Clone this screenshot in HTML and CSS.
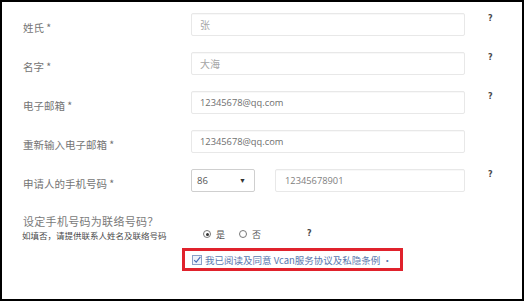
FILE: index.html
```html
<!DOCTYPE html>
<html lang="zh-CN">
<head>
<meta charset="utf-8">
<title>表单</title>
<link rel="stylesheet" href="styles.css">
</head>
<body>
<div class="frame">
  <div class="form">
    <div class="row">
      <label class="label">姓氏 *</label>
      <div class="control"><div class="input light">张</div></div>
      <span class="help">?</span>
    </div>
    <div class="row">
      <label class="label">名字 *</label>
      <div class="control"><div class="input light">大海</div></div>
      <span class="help">?</span>
    </div>
    <div class="row">
      <label class="label">电子邮箱 *</label>
      <div class="control"><div class="input">12345678@qq.com</div></div>
      <span class="help">?</span>
    </div>
    <div class="row">
      <label class="label">重新输入电子邮箱 *</label>
      <div class="control"><div class="input">12345678@qq.com</div></div>
      <span class="help hidden">?</span>
    </div>
    <div class="row">
      <label class="label">申请人的手机号码 *</label>
      <div class="control phone">
        <div class="select"><span>86</span><span class="caret">▼</span></div>
        <div class="input tel">12345678901</div>
      </div>
      <span class="help">?</span>
    </div>
  </div>
  <div class="contact">
    <div class="contact-text">
      <div class="q">设定手机号码为联络号码？</div>
      <div class="note">如填否，请提供联系人姓名及联络号码</div>
    </div>
    <div class="radios">
      <span class="radio on"></span><span class="rtext">是</span>
      <span class="radio"></span><span class="rtext">否</span>
      <span class="help inline">?</span>
    </div>
  </div>
  <div class="agree-wrap">
    <div class="agree">
      <svg class="check" width="10" height="10" viewBox="0 0 10 10">
        <rect x="0.5" y="0.5" width="9" height="9" fill="#eef3fb" stroke="#8aa0c8"/>
        <path d="M2.2 5.2 L4.2 7.2 L8.4 1.8" fill="none" stroke="#4a70b8" stroke-width="1.2"/>
      </svg>
      <span class="agree-text">我已阅读及同意 Vcan服务协议及私隐条例 ·</span>
    </div>
  </div>
</div>
</body>
</html>
```
FILE: styles.css
```css
html, body {
  margin: 0;
  padding: 0;
  background: #fff;
}
body {
  font-family: "Noto Sans CJK SC", "Noto Sans", sans-serif;
  color: #666;
}
.frame {
  width: 499px;
  height: 286px;
  border: 2px solid #000;
  padding: 11px 0 0 21px;
}
.form {
  display: flex;
  flex-direction: column;
  gap: 16px;
}
.row {
  display: grid;
  grid-template-columns: 168px 274px auto;
  align-items: start;
  height: 23px;
}
.label {
  font-size: 10.5px;
  line-height: 23px;
  padding-top: 3px;
  color: #747474;
  white-space: nowrap;
}
.control {
  height: 23px;
}
.input {
  height: 23px;
  box-sizing: border-box;
  border: 1px solid #e8e8e8;
  border-radius: 2px;
  padding: 0 8px;
  font-family: "Open Sans", "Noto Sans CJK SC", sans-serif;
  font-size: 9.3px;
  line-height: 21px;
  color: #6e6e6e;
  box-shadow: inset 0 1px 1px rgba(0,0,0,0.03);
}
.input.light {
  color: #a6a6a6;
  font-size: 10px;
  font-family: "Noto Sans CJK SC", sans-serif;
}
.phone {
  display: flex;
  gap: 20px;
}
.select {
  width: 64px;
  height: 23px;
  box-sizing: border-box;
  border: 1px solid #cfcfcf;
  border-radius: 2px;
  display: flex;
  justify-content: space-between;
  align-items: center;
  padding: 0 8px 0 5px;
  font-family: "Open Sans", sans-serif;
  font-size: 9.5px;
  color: #555;
}
.caret {
  font-size: 7px;
  color: #333;
}
.input.tel {
  flex: 1;
  padding-left: 9px;
  color: #808080;
}
.help {
  font-family: "DejaVu Sans", sans-serif;
  font-weight: bold;
  font-size: 8px;
  color: #4a4a4a;
  line-height: 10px;
  padding-top: 1px;
  margin-left: 23px;
}
.hidden {
  visibility: hidden;
}
.contact {
  display: flex;
  align-items: flex-end;
  margin-top: 21px;
}
.contact-text {
  width: 180px;
}
.q {
  font-size: 11px;
  line-height: 16px;
  color: #7a7a7a;
  letter-spacing: 0.3px;
}
.note {
  font-size: 8.5px;
  line-height: 12px;
  color: #4a4a4a;
  margin-left: -1px;
}
.radios {
  display: flex;
  align-items: center;
  height: 12px;
  margin-bottom: 1px;
}
.radio {
  width: 8px;
  height: 8px;
  box-sizing: border-box;
  border: 1px solid #777;
  border-radius: 50%;
  display: inline-block;
  position: relative;
}
.radio.on::after {
  content: "";
  position: absolute;
  left: 1.5px;
  top: 1.5px;
  width: 3px;
  height: 3px;
  border-radius: 50%;
  background: #333;
}
.rtext {
  font-size: 9px;
  color: #555;
  margin: 0 14px 0 5px;
}
.help.inline {
  margin-left: 32px;
  padding-top: 0;
}
.agree-wrap {
  margin-top: 7px;
  padding-left: 159px;
}
.agree {
  width: 221px;
  height: 23px;
  box-sizing: border-box;
  border: 3px solid #e0222c;
  display: flex;
  align-items: center;
  padding-left: 7px;
  gap: 3px;
}
.check {
  display: block;
}
.agree-text {
  font-size: 9.5px;
  color: #5a78ae;
  white-space: nowrap;
}
```
